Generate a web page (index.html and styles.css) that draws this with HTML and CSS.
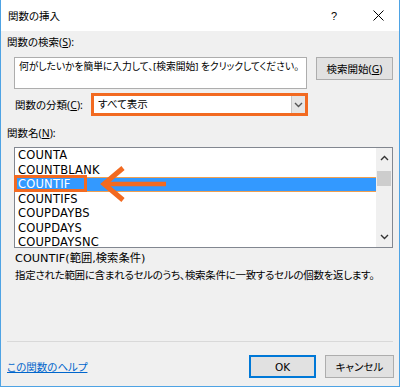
FILE: index.html
```html
<!DOCTYPE html>
<html lang="ja">
<head>
<meta charset="utf-8">
<link rel="stylesheet" href="styles.css">
</head>
<body>
<div class="window">
  <div class="titlebar">
    <span class="title">関数の挿入</span>
    <span class="help">?</span>
    <span class="close"><svg width="11" height="11" viewBox="0 0 11 11"><path d="M0.5 0.5L10.5 10.5M10.5 0.5L0.5 10.5" stroke="#000" stroke-width="1"/></svg></span>
  </div>
  <div class="content">
    <div class="label">関数の検索(<u>S</u>):</div>
    <div class="search-row">
      <div class="textbox">何がしたいかを簡単に入力して、[検索開始] をクリックしてください。</div>
      <div class="btn btn-search">検索開始(<u>G</u>)</div>
    </div>
    <div class="cat-row">
      <div class="cat-label">関数の分類(<u>C</u>):</div>
      <div class="select">
        <span class="select-text">すべて表示</span>
        <span class="select-arrow"><svg width="9" height="6" viewBox="0 0 9 6"><path d="M1 1L4.5 4.5L8 1" fill="none" stroke="#555" stroke-width="1.4"/></svg></span>
      </div>
    </div>
    <div class="label label-name">関数名(<u>N</u>):</div>
    <div class="listbox">
      <div class="items">
        <div class="item">COUNTA</div>
        <div class="item">COUNTBLANK</div>
        <div class="item selected">COUNTIF</div>
        <div class="item">COUNTIFS</div>
        <div class="item">COUPDAYBS</div>
        <div class="item">COUPDAYS</div>
        <div class="item">COUPDAYSNC</div>
      </div>
      <div class="scrollbar">
        <svg class="sb-up" width="9" height="6" viewBox="0 0 9 6"><path d="M1 5L4.5 1.5L8 5" fill="none" stroke="#333" stroke-width="1.4"/></svg>
        <div class="thumb"></div>
        <svg class="sb-down" width="9" height="6" viewBox="0 0 9 6"><path d="M1 1L4.5 4.5L8 1" fill="none" stroke="#333" stroke-width="1.4"/></svg>
      </div>
      <div class="highlight-box"></div>
      <svg class="arrow" width="70" height="44" viewBox="0 0 70 44"><path d="M25 4L6 20L25 36" fill="none" stroke="#f26a21" stroke-width="5" stroke-linejoin="miter"/><path d="M7 20H68" stroke="#f26a21" stroke-width="4.5"/></svg>
    </div>
    <div class="desc">
      <div class="syntax">COUNTIF(範囲,検索条件)</div>
      <div class="explain">指定された範囲に含まれるセルのうち、検索条件に一致するセルの個数を返します。</div>
    </div>
    <div class="separator"></div>
    <div class="footer">
      <a class="help-link" href="#">この関数のヘルプ</a>
      <div class="buttons">
        <div class="btn btn-ok">OK</div>
        <div class="btn btn-cancel">キャンセル</div>
      </div>
    </div>
  </div>
</div>
</body>
</html>
```

FILE: styles.css
```css
html, body {
  margin: 0;
  padding: 0;
}
body {
  font-family: "Noto Sans", "Noto Sans CJK JP", sans-serif;
  font-size: 10.5px;
  font-feature-settings: "palt";
  color: #000;
  background: #fff;
}
u { text-decoration: underline; text-underline-offset: 1px; }
.window {
  width: 400px;
  height: 387px;
  box-sizing: border-box;
  border: 1px solid #4ea3e4;
  border-top: none;
  background: #f0f0f0;
  position: relative;
}
.titlebar {
  height: 31px;
  background: #fff;
  display: flex;
  align-items: center;
  padding-left: 7px;
}
.title {
  font-size: 10.5px;
  flex: 1;
}
.help {
  font-family: "Liberation Sans", sans-serif;
  font-size: 11px;
  width: 10px;
  margin-right: 32px;
}
.close {
  display: flex;
  margin-right: 15px;
}
.content {
  padding: 0 5px 0 6px;
}
.label {
  height: 22px;
  line-height: 22px;
}
.search-row {
  display: flex;
  align-items: flex-start;
  margin-top: 4px;
  margin-left: 7px;
  gap: 9px;
}
.textbox {
  width: 293px;
  height: 32px;
  box-sizing: border-box;
  border: 1px solid #adadad;
  background: #fff;
  padding: 3px 4px;
  line-height: 12px;
  font-size: 9.8px;
  letter-spacing: -0.05px;
  white-space: nowrap;
  overflow: hidden;
}
.btn {
  box-sizing: border-box;
  height: 23px;
  border: 1px solid #adadad;
  background: #e1e1e1;
  display: flex;
  align-items: center;
  justify-content: center;
}
.btn-search { width: 77px; }
.cat-row {
  display: flex;
  align-items: center;
  margin-top: 4px;
  margin-left: 8px;
}
.cat-label {
  width: 76px;
}
.select {
  width: 217px;
  height: 23px;
  box-sizing: border-box;
  border: 3px solid #f26a21;
  background: #fff;
  display: flex;
  align-items: stretch;
}
.select-text {
  flex: 1;
  line-height: 17px;
  padding-left: 4px;
}
.select-arrow {
  width: 13px;
  background: #e5e5e5;
  border-left: 1px solid #c8c8c8;
  display: flex;
  align-items: center;
  justify-content: center;
}
.label-name {
  margin-top: 7px;
  height: 20px;
  line-height: 20px;
}
.listbox {
  margin-top: 4px;
  margin-left: 7px;
  width: 379px;
  height: 101px;
  box-sizing: border-box;
  border: 1px solid #828790;
  background: #fff;
  display: flex;
  position: relative;
}
.items {
  flex: 1;
}
.item {
  height: 14.5px;
  line-height: 14.5px;
  padding-left: 3px;
  font-family: "DejaVu Sans", "Noto Sans CJK JP", sans-serif;
  font-size: 11.5px;
  letter-spacing: 0.2px;
}
.item.selected {
  background: #3399ff;
  color: #fff;
  box-shadow: inset 0 1px 0 #f0a050, inset 0 -1px 0 #f0a050;
}
.scrollbar {
  width: 16px;
  background: #f0f0f0;
  display: flex;
  flex-direction: column;
  align-items: center;
}
.sb-up { margin-top: 7px; }
.thumb {
  width: 14px;
  height: 15px;
  background: #cdcdcd;
  margin-top: 10px;
}
.sb-down { margin-top: auto; margin-bottom: 7px; }
.highlight-box {
  position: absolute;
  left: -1px;
  top: 27px;
  width: 73px;
  height: 17px;
  box-sizing: border-box;
  border: 3px solid #f26a21;
}
.arrow {
  position: absolute;
  left: 83px;
  top: 16px;
}
.desc {
  margin-left: 8px;
  margin-top: 2px;
}
.syntax, .explain {
  height: 17px;
  line-height: 17px;
  white-space: nowrap;
}
.syntax {
  font-family: "DejaVu Sans", "Noto Sans CJK JP", sans-serif;
  font-size: 11.3px;
}
.explain {
  letter-spacing: -0.3px;
}
.separator {
  margin-top: 57px;
  width: 386px;
  height: 1px;
  background: #d9d9d9;
}
.footer {
  display: flex;
  align-items: center;
  margin-top: 13px;
}
.help-link {
  color: #0066cc;
  text-decoration: underline;
  flex: 1;
}
.buttons {
  display: flex;
  gap: 9px;
}
.btn-ok {
  width: 67px;
  border: 1px solid #0078d7;
  box-shadow: inset 0 0 0 1px #0078d7;
  font-family: "DejaVu Sans", sans-serif;
}
.btn-cancel { width: 69px; }
```
